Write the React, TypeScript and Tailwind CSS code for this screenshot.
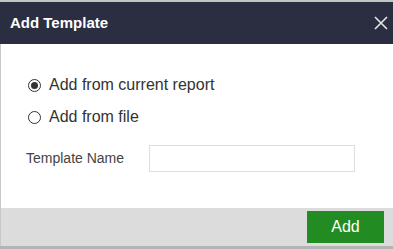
import React from "react";

export default function App() {
  return (
    <div className="w-[393px] h-[249px] bg-white flex flex-col overflow-hidden" style={{ fontFamily: '"Liberation Sans", Arial, sans-serif' }}>
      <div className="h-[2px] bg-[#c4c4c4]" />
      <div className="h-[42px] bg-[#2b2e40] flex items-center justify-between pl-[10px] pr-[5px]">
        <span className="text-white font-bold text-[15px]">Add Template</span>
        <svg width="14" height="14" viewBox="0 0 14 14">
          <path d="M1 1L13 13M13 1L1 13" stroke="#e6e6e6" strokeWidth="1.6" />
        </svg>
      </div>
      <div className="flex-1 border-l border-[#c8c8c8] flex flex-col">
        <div className="flex flex-col pt-[31px] pl-[27px] gap-[12px]">
          <label className="flex items-center gap-[8px] h-[20px] text-[16px] text-[#333]">
            <span className="w-[13px] h-[13px] rounded-full border border-[#333] flex items-center justify-center">
              <span className="w-[7px] h-[7px] rounded-full bg-[#333]" />
            </span>
            Add from current report
          </label>
          <label className="flex items-center gap-[8px] h-[20px] text-[16px] text-[#333]">
            <span className="w-[13px] h-[13px] rounded-full border border-[#333]" />
            Add from file
          </label>
        </div>
        <div className="flex items-center mt-[18px] pl-[25px]">
          <span className="w-[123px] text-[14px] text-[#444]">Template Name</span>
          <input className="w-[206px] h-[27px] border border-[#dedede] outline-none" />
        </div>
      </div>
      <div className="h-[38px] bg-[#dcdcdc] border-l border-[#c8c8c8] flex items-center justify-end pr-[9px]">
        <button className="w-[77px] h-[32px] bg-[#228b22] text-white text-[16px]">Add</button>
      </div>
      <div className="h-[3px] bg-[#b4b4b4]" />
    </div>
  );
}
